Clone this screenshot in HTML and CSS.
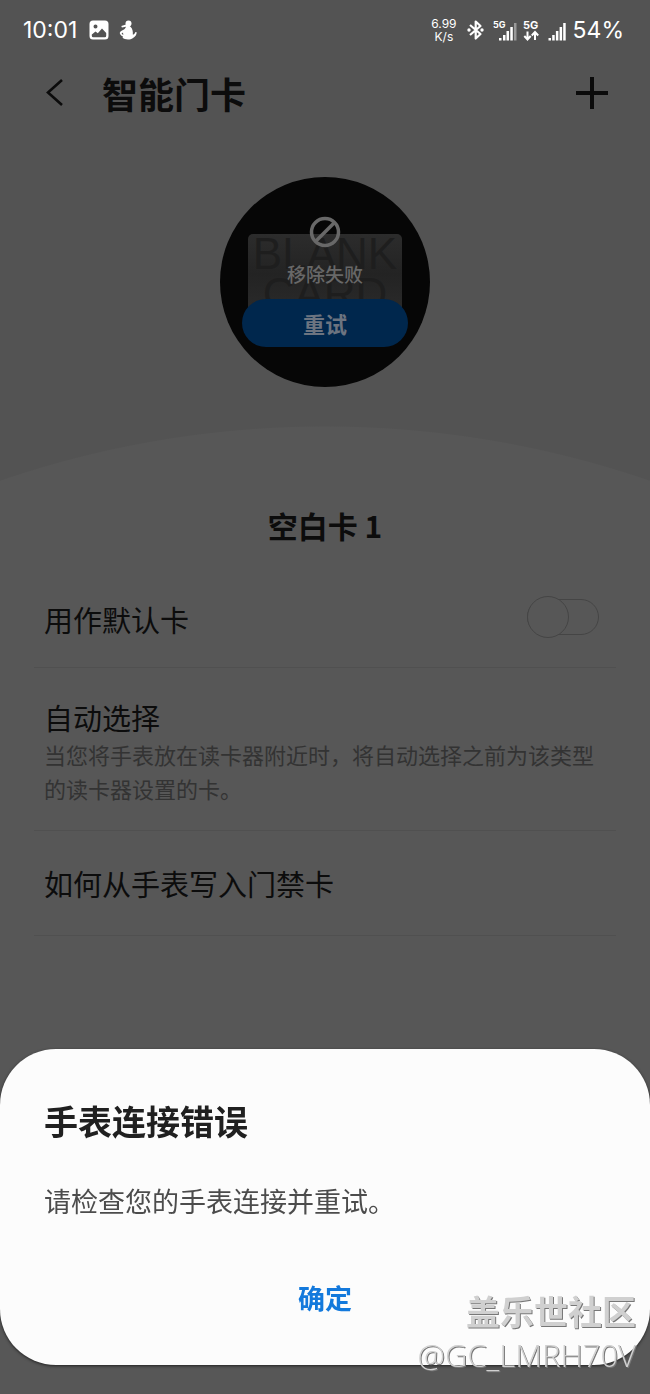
FILE: index.html
```html
<!DOCTYPE html>
<html lang="zh-CN">
<head>
    <meta charset="UTF-8">
    <meta name="viewport" content="width=device-width, initial-scale=1.0">
    <title>智能门卡</title>
    <link rel="stylesheet" href="styles.css">
</head>
<body>

<div class="status-bar">
    <span class="clock">10:01</span>
    <svg class="icon-picture" width="20" height="20" viewBox="0 0 20 20">
        <path fill="#fff" fill-rule="evenodd" d="M4 0.500h12a3.500 3.500 0 0 1 3.500 3.500v12a3.500 3.500 0 0 1-3.500 3.500H4A3.500 3.500 0 0 1 .5 16V4A3.500 3.500 0 0 1 4 .5zM6.500 4.500a2 2 0 1 0 0 4 2 2 0 0 0 0-4zM2.800 14.500v1.200q0 1.500 1.500 1.500h11.400q1.500 0 1.500-1.500v-2.700l-4.200-4.500-4.200 4.700-2.300-1.700z"/>
    </svg>
    <svg class="icon-app" width="18" height="20" viewBox="0 0 18 20">
        <circle fill="#fff" cx="9.500" cy="3.500" r="3"/>
        <path fill="#fff" d="M7 4.500L2.300 6l.6 1.600L7 6.800c-.6 1.500-1.500 2.500-3 3.300C2 11 .5 12.300.8 13.300c.3 1.500 1.700 2.700 3.200 3.200l-.4 1.300c1.200 1.200 3 1.700 5.400 1.700 2 0 3.600-.5 4.700-1.300 2.500-1.300 4-3.500 4-6l-1.300-.3c-.4 1.500-1.300 2.500-2.600 2.700.3-3-.3-6-2.300-7.800L9.500 5z"/>
        <path fill="#535353" d="M4 12.500l-1.500 1.200L4.300 15z"/>
    </svg>
    <span class="speed">6.99<br>K/s</span>
    <svg class="icon-bluetooth" width="17" height="20" viewBox="0 0 17 20">
        <path fill="none" stroke="#fff" stroke-width="2.200" stroke-linejoin="round" d="M3 5l10.500 9-4.800 4.500v-17L13.500 6 3 15"/>
        <circle fill="#fff" cx="2" cy="10" r="1.700"/>
        <circle fill="#fff" cx="15" cy="10" r="1.700"/>
    </svg>
    <svg class="icon-signal" width="24" height="21" viewBox="0 0 24 21">
        <text x="0" y="8" class="net-small">5G</text>
        <path fill="#fff" d="M6 18h2.500v2.500H6zM10 15h2.500v5.500H10zM13.500 11H16v9.500h-2.500zM17.300 7h2.500v13.500h-2.500z"/>
        <path fill="#999" d="M21 3h2.500v17.500H21z"/>
    </svg>
    <svg class="icon-data" width="17" height="21" viewBox="0 0 17 21">
        <text x="0" y="9" class="net">5G</text>
        <path fill="none" stroke="#fff" stroke-width="2" d="M4.500 11.500v8M1.300 16l3.200 3.500L7.700 16M12 20v-8M8.800 15.500L12 12l3.200 3.500"/>
    </svg>
    <svg class="icon-bars" width="18" height="21" viewBox="0 0 18 21">
        <path fill="#fff" d="M.5 18H3v2.500H.5zM4.200 15h2.500v5.500H4.200zM7.900 11h2.500v9.500H7.900zM11.600 7h2.500v13.500h-2.500zM15.200 3h2.500v17.500h-2.500z"/>
    </svg>
    <span class="battery">54%</span>
</div>

<header>
    <button class="icon-button" aria-label="返回">
        <svg width="18" height="28" viewBox="0 0 18 28">
            <path fill="none" stroke="#0b0b0b" stroke-width="2.600" d="M16 1L2 13.500 16 26"/>
        </svg>
    </button>
    <h1>智能门卡</h1>
    <button class="icon-button" aria-label="添加">
        <svg width="32" height="32" viewBox="0 0 32 32">
            <path fill="none" stroke="#0b0b0b" stroke-width="4" d="M16 0v32M0 16h32"/>
        </svg>
    </button>
</header>

<div class="preview">
    <div class="watch">
        <div class="card-art">BLANK<br>CARD</div>
        <div class="notice">
            <svg width="32" height="32" viewBox="0 0 32 32">
                <circle cx="16" cy="16" r="13.500" fill="none" stroke="#686868" stroke-width="3.500"/>
                <path stroke="#686868" stroke-width="3.500" d="M6.500 25.500l19-19"/>
            </svg>
            <span>移除失败</span>
        </div>
        <button class="retry">重试</button>
    </div>
</div>

<main>
    <h2>空白卡 1</h2>
    <div class="row">
        <label for="default-card">用作默认卡</label>
        <input type="checkbox" role="switch" class="switch" id="default-card">
    </div>
    <div class="row auto">
        <div>
            <h3>自动选择</h3>
            <p>当您将手表放在读卡器附近时，将自动选择之前为该类型的读卡器设置的卡。</p>
        </div>
    </div>
    <div class="row help">
        <a href="#">如何从手表写入门禁卡</a>
    </div>
</main>

<div class="dialog" role="dialog" aria-labelledby="dialog-title">
    <h2 id="dialog-title">手表连接错误</h2>
    <p>请检查您的手表连接并重试。</p>
    <button class="confirm">确定</button>
</div>

<div class="watermark">
    <strong>盖乐世社区</strong>
    <span>@GC_LMRH70V</span>
</div>

</body>
</html>
```
FILE: styles.css
```css
* {
    box-sizing: border-box;
}
body {
    display: flex;
    flex-direction: column;
    min-height: 100vh;
    margin: 0;
    overflow-x: hidden;
    font-family: "Noto Sans CJK SC", sans-serif;
    background-color: #535353;
    color: #0c0c0c;
}
h1, h2, h3, p {
    margin: 0;
}
button {
    padding: 0;
    border: none;
    background: none;
    font-family: inherit;
    cursor: pointer;
}
svg {
    display: block;
    flex: none;
    overflow: visible;
}

/* Status bar */
.status-bar {
    display: flex;
    align-items: center;
    height: 60px;
    padding: 0 26px 0 23px;
    font-family: Inter, sans-serif;
    color: #fff;
}
.clock, .battery {
    font-size: 23px;
    line-height: 28px;
}
.icon-picture {
    margin-left: 12px;
}
.icon-app {
    margin-left: 10px;
}
.speed {
    margin-left: auto;
    font-size: 12px;
    line-height: 13px;
    text-align: center;
}
.icon-bluetooth {
    margin-left: 10px;
}
.icon-signal {
    margin-left: 9px;
}
.icon-data {
    margin-left: 6px;
}
.icon-bars {
    margin: 0 7px 0 8px;
}
.net-small {
    font-size: 9px;
    font-weight: bold;
    fill: #fff;
}
.net {
    font-size: 11px;
    font-weight: bold;
    fill: #fff;
}

/* Title bar */
header {
    display: flex;
    align-items: center;
    height: 66px;
    padding: 0 42px 0 46px;
}
h1 {
    flex: 1;
    margin-left: 38px;
    font-size: 36px;
    line-height: 48px;
    font-weight: 700;
}

/* Watch preview */
.preview {
    display: flex;
    justify-content: center;
    padding: 51px 0 39px;
}
.watch {
    position: relative;
    display: flex;
    flex-direction: column;
    align-items: center;
    width: 210px;
    height: 210px;
    padding-top: 57px;
    border-radius: 50%;
    background-color: #060606;
}
.card-art {
    width: 154px;
    height: 80px;
    border-radius: 5px;
    background: linear-gradient(#2c2c2c, #232323 50%, #2b2b2b);
    color: #1e1e1e;
    font-family: "Liberation Sans", sans-serif;
    font-size: 44px;
    line-height: 40px;
    text-align: center;
}
.notice {
    position: absolute;
    top: 39px;
    left: 0;
    right: 0;
    display: flex;
    flex-direction: column;
    align-items: center;
    gap: 12px;
    font-size: 19px;
    line-height: 28px;
    font-weight: 500;
    color: #686868;
}
.retry {
    z-index: 1;
    width: 166px;
    height: 48px;
    margin-top: -15px;
    border-radius: 24px;
    background-color: #00274d;
    font-size: 22px;
    font-weight: 700;
    color: #6c7480;
}

/* Settings */
main {
    position: relative;
    flex: 1;
    padding: 74px 34px 0;
    background: radial-gradient(circle 1000px at 50% 1000px, #575757 999px, transparent 1000px);
}
main h2 {
    margin-bottom: 20px;
    font-size: 30px;
    line-height: 50px;
    font-weight: 700;
    text-align: center;
}
.row {
    display: flex;
    align-items: center;
    justify-content: space-between;
    padding: 0 10px;
    border-bottom: 1px solid #505050;
    font-size: 29px;
    line-height: 40px;
    min-height: 98px;
}
.row h3 {
    font-size: 29px;
    font-weight: 400;
}
.row p {
    font-size: 22px;
    line-height: 34px;
    color: #333;
}
.row a {
    color: inherit;
    text-decoration: none;
}
.auto {
    min-height: 163px;
    padding-top: 4px;
}
.help {
    min-height: 105px;
}
.switch {
    appearance: none;
    display: flex;
    align-items: center;
    width: 72px;
    height: 36px;
    margin: 0 7px 4px 0;
    border: 1px solid #454545;
    border-radius: 18px;
}
.switch::before {
    content: "";
    flex: none;
    width: 40px;
    height: 40px;
    margin-left: -1px;
    border: 1px solid #454545;
    border-radius: 50%;
    background-color: #575757;
}

/* Error dialog */
.dialog {
    position: fixed;
    left: 0;
    right: 0;
    bottom: 29px;
    display: flex;
    flex-direction: column;
    padding: 46px 44px 42px;
    border-radius: 56px;
    background-color: #fcfcfc;
    box-shadow: 0 1px 3px #222;
}
.dialog h2 {
    font-size: 34px;
    line-height: 52px;
    font-weight: 700;
    color: #202020;
}
.dialog p {
    margin: 34px 0 52px;
    font-size: 27px;
    line-height: 40px;
    color: #4c4c4c;
}
.confirm {
    align-self: center;
    font-size: 27px;
    line-height: 50px;
    font-weight: 700;
    color: #1379dc;
}

/* Community watermark */
.watermark {
    position: fixed;
    right: 14px;
    bottom: 18px;
    display: flex;
    flex-direction: column;
    align-items: flex-end;
    color: #d0d0d0;
    text-shadow: 1px 1px 0 #777;
}
.watermark strong {
    font-size: 34px;
    line-height: 46px;
}
.watermark span {
    font-family: "Open Sans", sans-serif;
    font-size: 31px;
    line-height: 42px;
    font-weight: 300;
}
```
